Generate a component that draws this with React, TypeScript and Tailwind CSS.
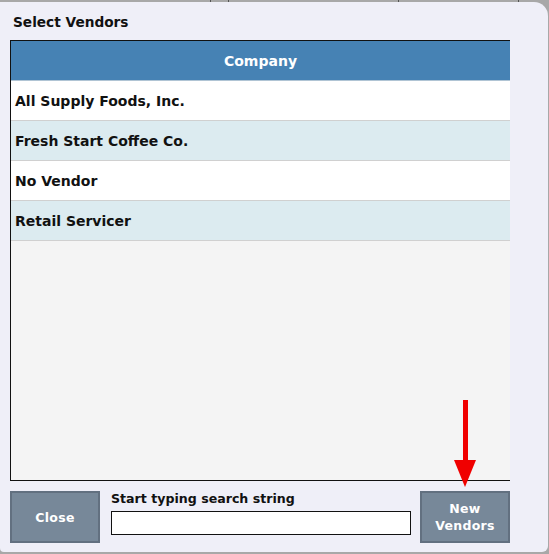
import React from 'react';

const vendors = ['All Supply Foods, Inc.', 'Fresh Start Coffee Co.', 'No Vendor', 'Retail Servicer'];

const font = { fontFamily: '"DejaVu Sans", Verdana, sans-serif' };

export default function App() {
  return (
    <div className="w-[549px] h-[554px] bg-[#a8a8a8] overflow-hidden relative" style={font}>
      {/* backdrop ticks */}
      <div className="absolute top-0 left-[210px] w-px h-[2px] bg-[#555]" />
      <div className="absolute top-0 left-[228px] w-px h-[2px] bg-[#555]" />
      <div className="absolute top-0 left-[398px] w-px h-[2px] bg-[#555]" />
      <div className="absolute top-0 left-[518px] w-px h-[2px] bg-[#555]" />

      <div className="mt-[2px] h-[550px] w-[548px] bg-[#efeff8] rounded-tr-[14px] rounded-br-[6px] rounded-bl-[4px] flex flex-col">
        <div className="h-[38px] pl-[13px] pt-[12px] text-[13.7px] font-bold text-[#111] leading-[17px]">
          Select Vendors
        </div>

        <div className="ml-[10px] w-[500px] h-[441px] border-l border-t border-b border-[#111] bg-[#f4f4f4] flex flex-col">
          <div className="h-[40px] pt-[2px] bg-[#4682b4] text-white font-bold text-[14px] flex items-center justify-center border-b border-[#b0c4d4]">
            Company
          </div>
          {vendors.map((v, i) => (
            <div
              key={v}
              className={`h-[40px] pt-[2px] flex items-center pl-[4px] text-[14px] font-bold text-[#111] border-b border-[#d0d0d0] ${
                i % 2 === 0 ? 'bg-white' : 'bg-[#dcebf0]'
              }`}
            >
              {v}
            </div>
          ))}
        </div>

        <div className="flex mt-[10px] ml-[10px] items-start">
          <button className="w-[90px] h-[52px] bg-[#778899] border-2 border-[#627080] text-white font-bold text-[12.5px] leading-[17px] tracking-[0.3px]">
            Close
          </button>
          <div className="ml-[11px] w-[300px] flex flex-col">
            <div className="text-[12.6px] font-bold text-[#111] leading-[16px] h-[20px]">Start typing search string</div>
            <input className="h-[24px] w-[300px] bg-white border border-[#111] outline-none" />
          </div>
          <div className="ml-[9px] relative">
            <svg className="absolute left-[33px] top-[-91px]" width="24" height="90" viewBox="0 0 24 90">
              <rect x="10" y="0" width="5" height="62" fill="#f00000" />
              <polygon points="1,60 23,60 12,87" fill="#f00000" />
            </svg>
            <button className="w-[90px] h-[52px] bg-[#778899] border-2 border-[#627080] text-white font-bold text-[12.5px] leading-[17px] tracking-[0.3px]">
              New
              <br />
              Vendors
            </button>
          </div>
        </div>
      </div>
    </div>
  );
}
